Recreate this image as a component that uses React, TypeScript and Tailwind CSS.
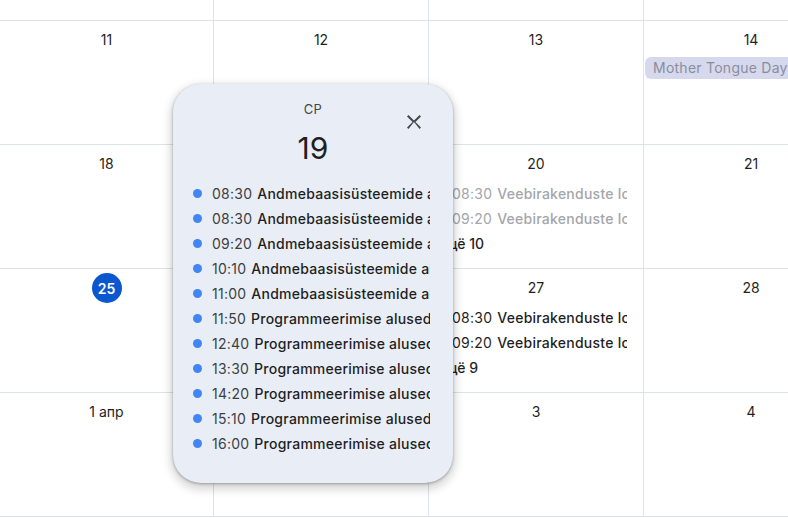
import React from "react";

type Ev = { time: string; title: string };

const dayEvents: Ev[] = [
  { time: "08:30", title: "Andmebaasisüsteemide alused" },
  { time: "08:30", title: "Andmebaasisüsteemide alused" },
  { time: "09:20", title: "Andmebaasisüsteemide alused" },
  { time: "10:10", title: "Andmebaasisüsteemide alused" },
  { time: "11:00", title: "Andmebaasisüsteemide alused" },
  { time: "11:50", title: "Programmeerimise alused" },
  { time: "12:40", title: "Programmeerimise alused" },
  { time: "13:30", title: "Programmeerimise alused" },
  { time: "14:20", title: "Programmeerimise alused" },
  { time: "15:10", title: "Programmeerimise alused" },
  { time: "16:00", title: "Programmeerimise alused" },
];

type Cell = {
  label?: string;
  today?: boolean;
  allDay?: string;
  events?: Ev[];
  past?: boolean;
  more?: string;
};

const weeks: Cell[][] = [
  [{ label: "11" }, { label: "12" }, { label: "13" }, { label: "14", allDay: "Mother Tongue Day" }],
  [
    { label: "18" },
    { label: "19" },
    {
      label: "20",
      past: true,
      events: [
        { time: "08:30", title: "Veebirakenduste loomine" },
        { time: "09:20", title: "Veebirakenduste loomine" },
      ],
      more: "Ещё 10",
    },
    { label: "21" },
  ],
  [
    { label: "25", today: true },
    { label: "26" },
    {
      label: "27",
      events: [
        { time: "08:30", title: "Veebirakenduste loomine" },
        { time: "09:20", title: "Veebirakenduste loomine" },
      ],
      more: "Ещё 9",
    },
    { label: "28" },
  ],
  [{ label: "1 апр" }, { label: "2" }, { label: "3" }, { label: "4" }],
];

function DayCell({ cell }: { cell: Cell }) {
  return (
    <div className="h-[124px] border-r border-b border-[#dde3ea] flex flex-col overflow-hidden">
      <div className="mt-[4px] h-[30px] flex items-center justify-center">
        {cell.today ? (
          <span className="w-[30px] h-[30px] rounded-full bg-[#0b57d0] text-white text-[14px] font-semibold flex items-center justify-center">
            {cell.label}
          </span>
        ) : (
          <span className="text-[14px] text-[#1f1f1f] leading-5">{cell.label}</span>
        )}
      </div>
      {cell.allDay && (
        <div className="mt-[2px] ml-[1px] mr-2 h-[22px] rounded-md bg-[#d6d9ee] text-[#8a8d9c] text-[14px] tracking-[0.25px] leading-[22px] pl-[8px] whitespace-nowrap overflow-hidden">
          {cell.allDay}
        </div>
      )}
      {cell.events && (
        <div className="mt-[2px] flex flex-col">
          {cell.events.map((e, i) => (
            <div
              key={i}
              className={
                "h-[25px] ml-[2px] mr-[16px] pl-[7px] flex items-center whitespace-nowrap overflow-hidden text-[14px] tracking-[0.25px] " +
                (cell.past ? "text-[#a3a6ab]" : "text-[#1f1f1f]")
              }
            >
              <span
                className={
                  "w-[8px] h-[8px] rounded-full shrink-0 mr-[6px] " +
                  (cell.past ? "bg-[#a8c4f8]" : "bg-[#4285f4]")
                }
              />
              <span className="mr-[5px]">{e.time}</span>
              <span className="font-medium">{e.title}</span>
            </div>
          ))}
          {cell.more && (
            <div className="h-[25px] ml-[8px] flex items-center text-[14px] font-medium text-[#1f1f1f]">
              {cell.more}
            </div>
          )}
        </div>
      )}
    </div>
  );
}

export default function App() {
  return (
    <div className="relative w-[788px] h-[518px] overflow-hidden bg-white font-['Inter',sans-serif]">
      <div className="grid grid-cols-[214px_215px_215px_215px] w-[859px]">
        {[0, 1, 2, 3].map((i) => (
          <div key={i} className="h-[21px] border-r border-b border-[#dde3ea]" />
        ))}
        {weeks.map((w, wi) => w.map((c, ci) => <DayCell key={wi + "-" + ci} cell={c} />))}
      </div>

      {/* popup for day 19 */}
      <div className="absolute left-[173px] top-[84px] w-[280px] h-[399px] rounded-[28px] bg-[#e9eef6] shadow-[0_4px_8px_3px_rgba(0,0,0,0.15),0_1px_3px_rgba(0,0,0,0.3)] pt-[17px]">
        <button className="absolute right-[27px] top-[26px] w-6 h-6 text-[#444746]">
          <svg viewBox="0 0 24 24" width="24" height="24" fill="currentColor">
            <path d="M19 6.41L17.59 5 12 10.59 6.41 5 5 6.41 10.59 12 5 17.59 6.41 19 12 12 17.59 19 19 17.59 13.41 12z" />
          </svg>
        </button>
        <div className="text-center text-[13px] leading-4 text-[#444746] tracking-wide">СР</div>
        <div className="mt-[13px] text-center text-[30px] leading-9 text-[#1f1f1f]">19</div>
        <div className="mt-[15px] pl-[20px] pr-[23px] flex flex-col">
          {dayEvents.map((e, i) => (
            <div key={i} className="h-[25px] flex items-center whitespace-nowrap overflow-hidden text-[14px] tracking-[0.25px]">
              <span className="w-[9px] h-[9px] rounded-full bg-[#4285f4] shrink-0 mr-[10px]" />
              <span className="text-[#3c4043] mr-[5px]">{e.time}</span>
              <span className="font-medium text-[#1f1f1f]">{e.title}</span>
            </div>
          ))}
        </div>
      </div>
    </div>
  );
}
